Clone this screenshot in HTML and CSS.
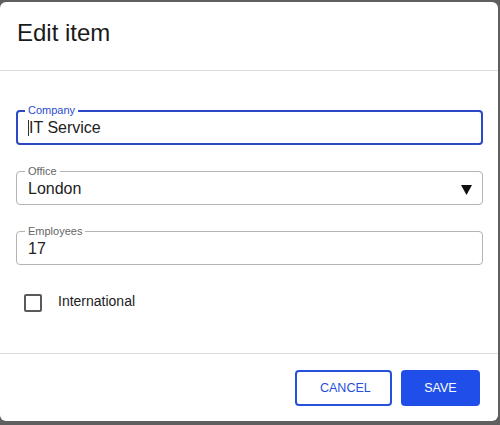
FILE: index.html
```html
<!DOCTYPE html>
<html>
<head>
<meta charset="utf-8">
<link rel="stylesheet" href="styles.css">
</head>
<body>
<div class="dialog">
  <div class="header"><h1 class="title">Edit item</h1></div>
  <div class="content">
    <fieldset class="field focused">
      <legend class="label">Company</legend>
      <div class="value"><span class="caret"></span>IT Service</div>
    </fieldset>
    <fieldset class="field">
      <legend class="label">Office</legend>
      <div class="value select">
        <span>London</span>
        <svg class="arrow" width="11" height="11" viewBox="0 0 11 11"><polygon points="0,1 11,1 5.5,11" fill="#111"/></svg>
      </div>
    </fieldset>
    <fieldset class="field">
      <legend class="label">Employees</legend>
      <div class="value">17</div>
    </fieldset>
    <div class="check-row">
      <span class="checkbox"></span>
      <span class="check-label">International</span>
    </div>
  </div>
  <div class="footer">
    <button class="btn btn-outline">CANCEL</button>
    <button class="btn btn-primary">SAVE</button>
  </div>
</div>
</body>
</html>
```
FILE: styles.css
```css
html, body {
  margin: 0;
  padding: 0;
}
body {
  background: #5f5f5f;
  width: 500px;
  height: 425px;
  overflow: hidden;
  font-family: "Liberation Sans", Arial, sans-serif;
  color: #222;
}
.dialog {
  margin-top: 2px;
  width: 498px;
  height: 419px;
  background: #fff;
  border-radius: 6px;
  display: flex;
  flex-direction: column;
  box-sizing: border-box;
}
.header {
  height: 69px;
  box-sizing: border-box;
  border-bottom: 1px solid #dcdcdc;
  padding: 17px 17px 0 17px;
}
.title {
  margin: 0;
  font-size: 24px;
  line-height: 28px;
  font-weight: normal;
  color: #1a1a1a;
}
.content {
  flex: 1;
  padding: 33px 15px 0 16px;
}
.field {
  margin: 0 0 20px 0;
  padding: 1px 11px 5px 11px;
  border: 1px solid #b3b3b3;
  border-radius: 4px;
  min-width: 0;
}
.field.focused {
  border: 2px solid #2b49c6;
  padding: 1px 10px 5px 10px;
}
.label {
  font-size: 11px;
  line-height: 13px;
  padding: 0 3px;
  margin-left: -3px;
  color: #666;
}
.focused .label {
  color: #2b4bcc;
}
.value {
  font-size: 16px;
  line-height: 20px;
  color: #222;
  display: flex;
  align-items: center;
}
.caret {
  display: inline-block;
  width: 1px;
  height: 16px;
  background: #333;
  margin-right: 0;
}
.select {
  justify-content: space-between;
}
.arrow {
  display: block;
  margin-right: -1px;
}
.check-row {
  display: flex;
  align-items: flex-start;
  margin-top: 28px;
  padding-left: 8px;
}
.checkbox {
  width: 18px;
  height: 18px;
  box-sizing: border-box;
  border: 2px solid #5a5a5a;
  border-radius: 2px;
  margin-top: 1px;
}
.check-label {
  margin-left: 16px;
  font-size: 14px;
  line-height: 16px;
  color: #222;
}
.footer {
  border-top: 1px solid #dcdcdc;
  padding: 16px 18px 15px 0;
  display: flex;
  justify-content: flex-end;
  gap: 9px;
}
.btn {
  height: 36px;
  box-sizing: border-box;
  border-radius: 4px;
  font-family: "Liberation Sans", Arial, sans-serif;
  font-size: 12.5px;
  padding: 0 23px;
  cursor: pointer;
}
.btn-outline {
  background: #fff;
  border: 2px solid #2450dc;
  color: #2450dc;
  width: 97px;
}
.btn-primary {
  background: #1f4fe8;
  border: 0;
  color: #fff;
  width: 79px;
}
```
